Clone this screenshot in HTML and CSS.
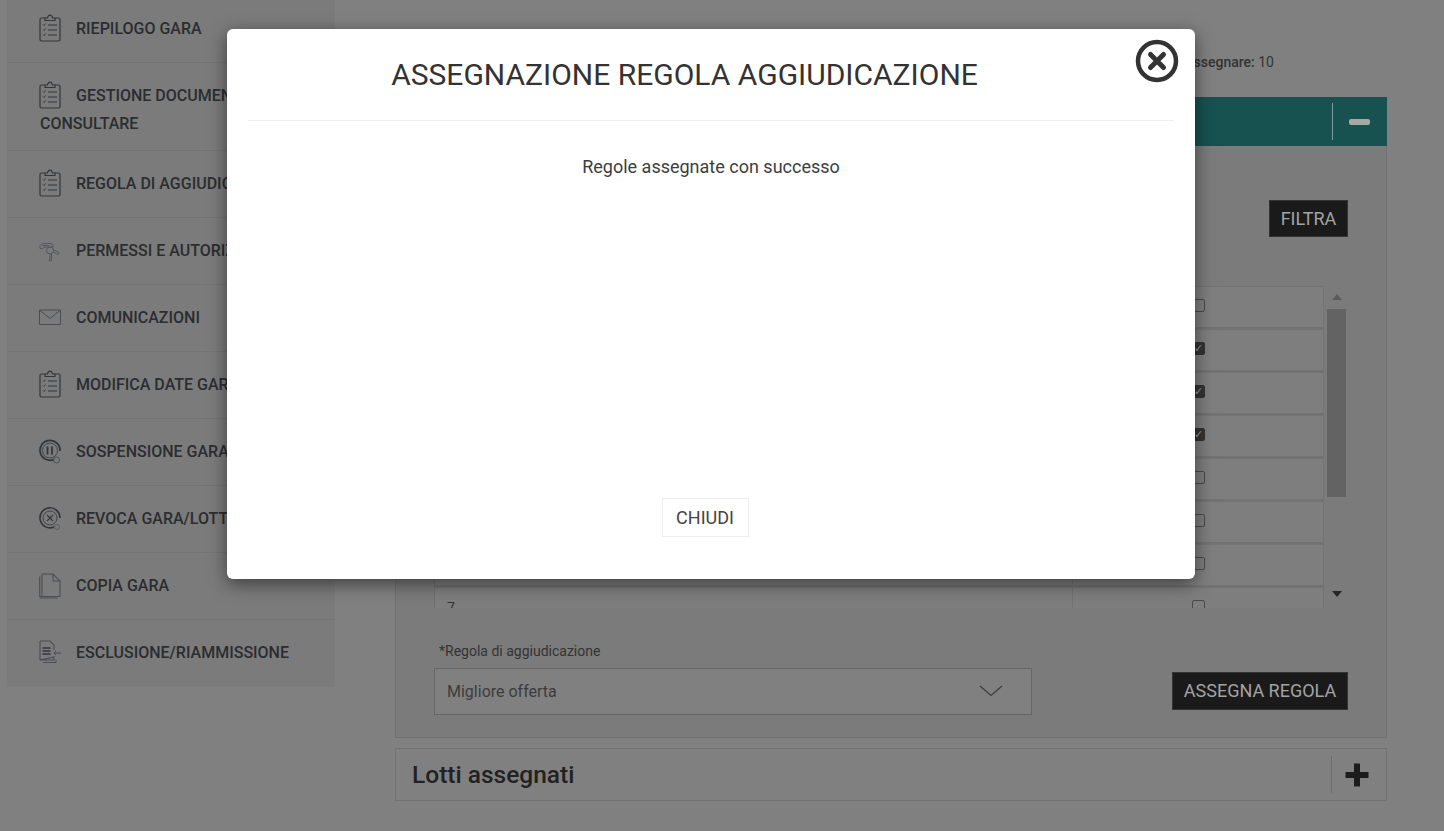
FILE: index.html
```html
<!DOCTYPE html>
<html lang="it">
<head>
<meta charset="utf-8">
<title>Assegnazione regola aggiudicazione</title>
<link rel="stylesheet" href="styles.css">
</head>
<body>
<svg class="defs" width="0" height="0" aria-hidden="true">
  <symbol id="clip" viewBox="0 0 22 28">
    <path d="M6 4H2.500A1.500 1.500 0 0 0 1 5.500v20A1.500 1.500 0 0 0 2.500 27h17a1.500 1.500 0 0 0 1.500-1.500v-20A1.500 1.500 0 0 0 19.500 4H16" fill="none" stroke="#33363a" stroke-width="1.200"/>
    <path d="M6 6.500V4h2.500c.4-1.800 1.300-2.800 2.500-2.800s2.100 1 2.500 2.800H16v2.500z" fill="none" stroke="#33363a" stroke-width="1.200"/>
    <path d="M4 10.500l1 1 1.500-2M4 15.500l1 1 1.500-2M4 20.500l1 1 1.500-2" fill="none" stroke="#33363a" stroke-width=".9"/>
    <path d="M9 11h9M9 16h9M9 21h9" stroke="#33363a" stroke-width="1.100"/>
  </symbol>
</svg>
<div class="page">
  <nav class="sidebar">
    <a class="item"><svg class="ico"><use href="#clip"/></svg>RIEPILOGO GARA</a>
    <a class="item"><svg class="ico"><use href="#clip"/></svg>GESTIONE DOCUMENTI DA CONSULTARE</a>
    <a class="item"><svg class="ico"><use href="#clip"/></svg>REGOLA DI AGGIUDICAZIONE</a>
    <a class="item"><svg class="ico" viewBox="0 0 22 28"><g fill="none" stroke="#55585c" stroke-width="1"><path d="M1 9.500l2-2h9l2 1.500v2H5l-1 1.500H1z"/><circle cx="11" cy="14.500" r="3.500"/><path d="M11 18v5l-1 1 1 1.500 1.500-1v-6.500M14 13.500l6 3-1 2-5-2.500"/><path d="M3 9.500h7"/></g></svg>PERMESSI E AUTORIZZAZIONI</a>
    <a class="item"><svg class="ico" viewBox="0 0 22 28"><path d="M.5 7h21v14.500H.5zM1 7.500L11 15.500 21 7.500" fill="none" stroke="#4a4d51" stroke-width="1"/></svg>COMUNICAZIONI</a>
    <a class="item"><svg class="ico"><use href="#clip"/></svg>MODIFICA DATE GARA</a>
    <a class="item"><svg class="ico" viewBox="0 0 22 28"><path d="M15 22.500A10 10 0 1 1 21 14" fill="none" stroke="#33363a" stroke-width="1.800"/><circle cx="11" cy="13.500" r="7.500" fill="none" stroke="#33363a" stroke-width=".8"/><path d="M8.500 9.500v8M13 9.500v8" stroke="#33363a" stroke-width="1.800"/><circle cx="17.500" cy="23" r="3" fill="none" stroke="#44474b" stroke-width=".8"/></svg>SOSPENSIONE GARA</a>
    <a class="item"><svg class="ico" viewBox="0 0 22 28"><path d="M15 23A10 10 0 1 1 21 14" fill="none" stroke="#33363a" stroke-width="1.600"/><circle cx="11" cy="14" r="7" fill="none" stroke="#33363a" stroke-width=".8"/><path d="M8 11l6 6M14 11l-6 6" stroke="#33363a" stroke-width="1.100"/><circle cx="18" cy="23" r="2.500" fill="none" stroke="#55585c" stroke-width=".8"/></svg>REVOCA GARA/LOTTO</a>
    <a class="item"><svg class="ico" viewBox="0 0 22 28"><path d="M3 3h11l7 7v15.500H3zM14 3v7h7M3 25.500H.7V5.500M.7 27h18" fill="none" stroke="#4a4d51" stroke-width="1.100"/></svg>COPIA GARA</a>
    <a class="item"><svg class="ico" viewBox="0 0 22 28"><path d="M1 3h10l4 4v5M15 19v3H1zM1 3v19" fill="none" stroke="#4a4d51" stroke-width="1.100"/><path d="M3.500 10h8M3.500 13h8M3.500 16h8" stroke="#33363a" stroke-width="1.600"/><path d="M15 15h7M17 13l-2 2 2 2M4 24.500h13v-3" fill="none" stroke="#4a4d51" stroke-width="1"/></svg>ESCLUSIONE/RIAMMISSIONE</a>
  </nav>

  <main class="main">
    <p class="summary"><b>Lotti da assegnare:</b> 10</p>

    <section class="panel">
      <header class="panel-head">
        <h2 class="panel-title">Lotti da assegnare</h2>
        <span class="toggle"><span class="minus"></span></span>
      </header>
      <div class="panel-body">
        <div class="filter-row"><button class="btn btn-filter">FILTRA</button></div>
        <div class="table-wrap">
          <div class="table">
            <div class="row"><span class="cell-a">0</span><span class="cell-b"><i class="box"></i></span></div>
            <div class="row"><span class="cell-a">1</span><span class="cell-b"><i class="box on">✓</i></span></div>
            <div class="row"><span class="cell-a">2</span><span class="cell-b"><i class="box on">✓</i></span></div>
            <div class="row"><span class="cell-a">3</span><span class="cell-b"><i class="box on">✓</i></span></div>
            <div class="row"><span class="cell-a">4</span><span class="cell-b"><i class="box"></i></span></div>
            <div class="row"><span class="cell-a">5</span><span class="cell-b"><i class="box"></i></span></div>
            <div class="row"><span class="cell-a">6</span><span class="cell-b"><i class="box"></i></span></div>
            <div class="row"><span class="cell-a">7</span><span class="cell-b"><i class="box"></i></span></div>
          </div>
          <div class="scrollbar">
            <span class="arrow up"></span>
            <span class="thumb"></span>
            <span class="arrow down"></span>
          </div>
        </div>
        <div class="form-row">
          <div class="field">
            <label class="label">*Regola di aggiudicazione</label>
            <div class="select">Migliore offerta
              <svg class="chev" width="24" height="12" viewBox="0 0 24 12"><path d="M1 1l11 9.500L23 1" fill="none" stroke="#3c3c3c" stroke-width="1.200"/></svg>
            </div>
          </div>
          <button class="btn btn-assign">ASSEGNA REGOLA</button>
        </div>
      </div>
    </section>

    <section class="panel-closed">
      <h2 class="closed-title">Lotti assegnati</h2>
      <span class="toggle dark"><svg width="26" height="26" viewBox="0 0 26 26"><path d="M13 1.500v23M1.500 13h23" stroke="#1c1c1c" stroke-width="6"/></svg></span>
    </section>
  </main>
</div>

<div class="modal" role="dialog">
  <header class="modal-head">
    <h1 class="modal-title">ASSEGNAZIONE REGOLA AGGIUDICAZIONE</h1>
    <svg class="close" width="44" height="44" viewBox="0 0 44 44"><circle cx="22" cy="22" r="19" fill="none" stroke="#333" stroke-width="4.500"/><path d="M15.500 15.500l13 13M28.500 15.500l-13 13" stroke="#333" stroke-width="5" stroke-linecap="round"/></svg>
  </header>
  <div class="modal-body">Regole assegnate con successo</div>
  <footer class="modal-foot"><button class="btn-close">CHIUDI</button></footer>
</div>
</body>
</html>
```
FILE: styles.css
```css
* { box-sizing: border-box; }
html, body { margin: 0; height: 831px; overflow: hidden; }
body {
  background: #808080;
  color: #2b2d30;
  font-family: Roboto, "Noto Sans", sans-serif;
  position: relative;
}
.defs { position: absolute; }
.page { display: flex; align-items: flex-start; margin-top: -4px; }

.sidebar { width: 328px; margin-left: 7px; padding-bottom: 1px; background: #7b7b7b; flex: none; }
.item {
  display: block;
  padding: 18px 10px 16px 33px;
  font-size: 16px;
  font-weight: 500;
  line-height: 21px;
  color: #2b2d30;
  border-bottom: 1px solid #747474;
}
.item:last-child { border-bottom: 0; }
.ico { width: 22px; height: 28px; margin: 0 15px 4px -1px; vertical-align: -12px; }

.main { width: 992px; margin-left: 60px; flex: none; }
.summary { margin: 56px 113px 0 0; height: 45px; font-size: 14px; line-height: 20px; text-align: right; color: #333; }
.summary b { font-weight: 500; }

.panel { border: 1px solid #727272; border-top: 0; background: #7b7b7b; height: 641px; }
.panel-head {
  height: 49px; margin: 0 -1px; background: #175250;
  display: flex; align-items: center; justify-content: space-between; padding-left: 17px;
}
.panel-title { margin: 0; font-size: 24px; font-weight: 500; color: #808080; }
.toggle { width: 55px; height: 37px; border-left: 1px solid #76a09d; display: flex; align-items: center; justify-content: center; padding-right: 2px; }
.toggle.dark { border-left-color: #6c6c6c; padding-right: 4px; }
.minus { width: 21px; height: 6px; border-radius: 2px; background: #a8a8a8; }

.panel-body { padding: 54px 38px 0 38px; }
.filter-row { display: flex; justify-content: flex-end; height: 86px; }
.btn {
  border: 1px solid #333; background: #1a1a1a; color: #a3a3a3;
  font: 400 18px/1 Roboto, sans-serif; padding: 0;
}
.btn-filter { width: 79px; height: 37px; }

.table-wrap { display: flex; height: 322px; overflow: hidden; }
.table { width: 890px; flex: none; border-left: 1px solid #707070; }
.row { display: flex; height: 43px; background: #7e7e7e; border: 1px solid #747474; border-left: 0; border-bottom: 2px solid #727272; }
.cell-a { width: 638px; padding: 12px 0 0 12px; border-right: 1px solid #727272; font-size: 14px; color: #333; }
.cell-b { flex: 1; padding-left: 119px; padding-top: 12px; }
.box {
  display: block; width: 13px; height: 13px; border: 1px solid #4a4a4a; border-radius: 2px;
  font: 700 11px/11px "DejaVu Sans", sans-serif; color: #9a9a9a; text-align: center; overflow: hidden;
}
.box.on { background: #333; border-color: #333; }

.scrollbar { width: 22px; margin-left: 2px; padding-right: 1px; background: #7b7b7b; display: flex; flex-direction: column; align-items: center; padding-top: 8px; }
.arrow { width: 0; height: 0; border-left: 5px solid transparent; border-right: 5px solid transparent; }
.arrow.up { border-bottom: 6px solid #5c5c5c; }
.arrow.down { border-top: 6px solid #262626; margin-top: 94px; }
.thumb { width: 19px; height: 188px; background: #636363; margin-top: 9px; }

.form-row { display: flex; align-items: flex-end; justify-content: space-between; margin-top: 33px; }
.label { display: block; padding-left: 5px; font-size: 14px; line-height: 20px; color: #333; margin-bottom: 7px; }
.select {
  position: relative; width: 598px; height: 47px; border: 1px solid #666; background: #808080;
  padding-left: 12px; font-size: 16px; line-height: 45px; color: #3c3c3c;
}
.chev { position: absolute; right: 28px; top: 16px; }
.btn-assign { width: 176px; height: 38px; margin-bottom: 5px; }

.panel-closed {
  margin-top: 10px; height: 53px; border: 1px solid #727272; background: #808080;
  display: flex; align-items: center; justify-content: space-between; padding-left: 16px;
}
.closed-title { margin: 0; font-size: 24.500px; font-weight: 500; color: #222; }

.modal {
  position: absolute; left: 227px; top: 29px; width: 968px; height: 550px;
  background: #fff; border-radius: 6px; box-shadow: 0 5px 18px rgba(0,0,0,.5);
  display: flex; flex-direction: column; padding: 0 21px;
}
.modal-head { position: relative; height: 92px; border-bottom: 1px solid #eee; text-align: center; }
.modal-title { margin: 0; padding-top: 24px; padding-right: 53px; font-size: 30px; line-height: 44px; font-weight: 400; color: #333; }
.close { position: absolute; right: -5px; top: 10px; }
.modal-body { flex: 1; padding-top: 35px; text-align: center; font-size: 18px; font-weight: 400; line-height: 22px; color: #3b3e42; }
.modal-foot { display: flex; justify-content: center; padding-bottom: 42px; padding-right: 12px; }
.btn-close { width: 87px; height: 39px; background: #fff; border: 1px solid #eee; font: 400 18px/1 Roboto, sans-serif; color: #444; padding: 0; }
```
